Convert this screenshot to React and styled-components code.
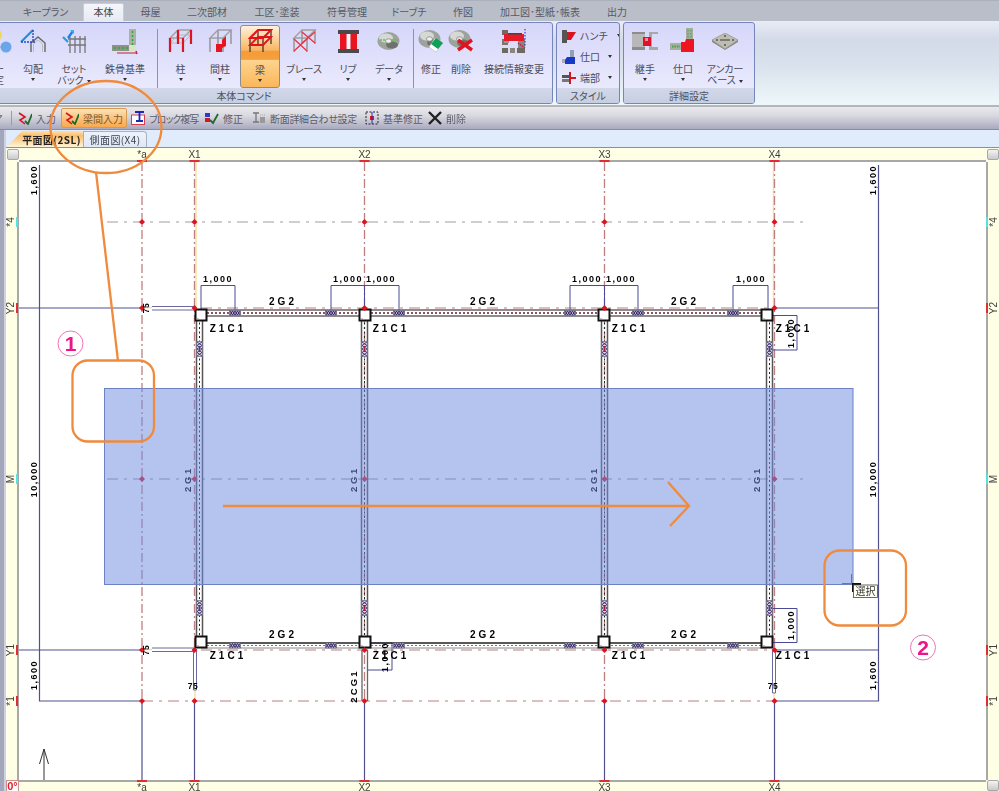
import React from "react";
import styled, { createGlobalStyle } from "styled-components";

const Global = createGlobalStyle`
  html, body { margin: 0; padding: 0; background: #fff; }
  #root { width: 999px; height: 791px; }
`;

const Page = styled.div`
  position: relative;
  width: 999px;
  height: 791px;
  overflow: hidden;
  display: flex;
  flex-direction: column;
  font-family: "Noto Sans CJK JP", "Liberation Sans", sans-serif;
  font-feature-settings: "palt";
  font-size: 10px;
  color: #4c4c58;
  filter: blur(0.4px);
`;

/* ---------- ribbon ---------- */
const TabBar = styled.div`
  height: 21px;
  flex: none;
  display: flex;
  align-items: flex-end;
  padding-left: 8px;
  background: #b9bec9;
  border-top: 1px solid #aab0bc;
  box-sizing: border-box;
`;
const RibbonTab = styled.div`
  width: ${(p) => p.$w}px;
  height: 18px;
  box-sizing: border-box;
  display: flex;
  align-items: center;
  justify-content: center;
  padding-bottom: 2px;
  white-space: nowrap;
  font-size: 10px;
  color: #565a66;
  ${(p) =>
    p.$active &&
    `background: linear-gradient(#f4f6fa, #e6eaf3);
     border-radius: 2px 2px 0 0;
     border: 1px solid #c8ccd6;
     border-bottom: none;
     color: #444;`}
`;
const Ribbon = styled.div`
  height: 86px;
  flex: none;
  box-sizing: border-box;
  display: flex;
  gap: 3px;
  padding-top: 1px;
  background: linear-gradient(#e8ecf5 0, #d4dae8 22%, #d8e1ec 50%, #eef7f9 100%);
  border-bottom: 2px solid #b4b6bc;
`;
const Group = styled.div`
  width: ${(p) => p.$w}px;
  margin-left: ${(p) => p.$ml || 0}px;
  height: 82px;
  flex: none;
  box-sizing: border-box;
  display: flex;
  flex-direction: column;
  border: 1px solid #7686bb;
  border-radius: 3px;
  overflow: hidden;
  background: linear-gradient(#d6d6fa, #eeeefe);
`;
const GroupBody = styled.div`
  flex: 1;
  display: flex;
  flex-direction: ${(p) => (p.$col ? "column" : "row")};
  padding: ${(p) => p.$pad || "2px 0 0 0"};
  min-height: 0;
`;
const GroupLabel = styled.div`
  height: 15px;
  flex: none;
  display: flex;
  align-items: center;
  justify-content: center;
  background: linear-gradient(#d2d8e8, #c6cee2);
  color: #4e5260;
  font-size: 10px;
`;
const BigButton = styled.div`
  width: ${(p) => p.$w}px;
  height: 63px;
  flex: none;
  box-sizing: border-box;
  display: flex;
  flex-direction: column;
  align-items: center;
  ${(p) =>
    p.$active &&
    `border: 1px solid #8c8c8c;
     border-radius: 3px;
     background: linear-gradient(#fff0dc 0, #fbc884 28%, #f9b463 40%, #f39c38 41%, #f59f3e 54%, #f6a648 55%, #fdd48e 56%, #fbb65a 100%);`}
`;
const IconSlot = styled.div`
  height: 32px;
  flex: none;
  margin: ${(p) => (p.$active ? "-1px 0 7px" : "0 0 6px")};
  display: flex;
  align-items: center;
  justify-content: center;
`;
const BigLabel = styled.div`
  display: flex;
  flex-direction: column;
  align-items: center;
  line-height: 11px;
  font-size: 10px;
  white-space: nowrap;
  color: #4c4c58;
`;
const Caret = styled.span`
  display: inline-block;
  flex: none;
  width: 0;
  height: 0;
  border-left: 2.5px solid transparent;
  border-right: 2.5px solid transparent;
  border-top: 3px solid #333;
  margin: ${(p) => p.$m || "4px 0 0 0"};
  vertical-align: middle;
`;
const Separator = styled.div`
  width: 1px;
  height: 59px;
  margin: 4px ${(p) => p.$mr}px 0 ${(p) => p.$ml}px;
  background: #8e94a8;
  flex: none;
`;
const SmallRow = styled.div`
  height: 21px;
  display: flex;
  align-items: center;
  gap: 4px;
  padding-left: 5px;
  white-space: nowrap;
`;

/* ---------- toolbar ---------- */
const Toolbar = styled.div`
  height: 23px;
  flex: none;
  box-sizing: border-box;
  display: flex;
  align-items: center;
  background: linear-gradient(#e9e9ed, #d8d8e0 40%, #aaaac0);
  border-bottom: 1px solid #8c8c9a;
`;
const ToolClip = styled.span`
  width: 10px;
  margin: 0 8px 0 -7px;
  flex: none;
  color: #5c5c68;
`;
const ToolSep = styled.div`
  width: 1px;
  height: 14px;
  margin-right: 2px;
  background: #9a9aa8;
`;
const ToolItem = styled.div`
  width: ${(p) => p.$w}px;
  height: 20px;
  flex: none;
  box-sizing: border-box;
  display: flex;
  align-items: center;
  gap: 4px;
  padding-left: 4px;
  white-space: nowrap;
  color: #5c5c68;
  font-size: 10px;
  letter-spacing: ${(p) => p.$sp || 0}px;
  ${(p) =>
    p.$active &&
    `background: linear-gradient(#fde3b8, #fbc37c 50%, #f9a94e);
     border: 1px solid #d89a50;
     border-radius: 2px;
     padding-left: 3px;
     color: #7a5a30;`}
`;

/* ---------- workspace ---------- */
const Body = styled.div`
  flex: 1;
  display: flex;
  min-height: 0;
`;
const SideStrip = styled.div`
  width: 6px;
  flex: none;
  background: linear-gradient(to right, #a4a6bc 0, #a4a6bc 4px, #ced2de 4px);
`;
const Workspace = styled.div`
  flex: 1;
  display: flex;
  flex-direction: column;
  min-width: 0;
`;
const SheetTabs = styled.div`
  height: 18px;
  flex: none;
  box-sizing: border-box;
  display: flex;
  align-items: flex-end;
  padding-left: 1px;
  background: #e0ebfb;
  border-bottom: 1px solid #8f8f8f;
`;
const SheetTab = styled.div`
  width: ${(p) => p.$w}px;
  height: 16px;
  flex: none;
  box-sizing: border-box;
  display: flex;
  align-items: center;
  justify-content: center;
  white-space: nowrap;
  font-size: 10px;
  padding-left: ${(p) => (p.$active ? 13 : 0)}px;
  border-radius: 0 4px 0 0;
  letter-spacing: 0.4px;
  font-weight: ${(p) => (p.$active ? 700 : 400)};
  color: ${(p) => (p.$active ? "#222" : "#3d4452")};
  background: ${(p) =>
    p.$active ? "linear-gradient(#ffe0a4, #fbbe6e 30%, #fff4d6)" : "linear-gradient(#eef3fb, #dfe8f5)"};
  ${(p) =>
    p.$active
      ? "clip-path: polygon(15px 0, 100% 0, 100% 100%, 0 100%);"
      : "border: 1px solid #a8b0c0; border-bottom: none;"}
`;
const CadGrid = styled.div`
  display: grid;
  grid-template-columns: 13px 967px 13px;
  grid-template-rows: 14px 618px 11px;
  background: #fff;
`;
const Ruler = styled.div`
  overflow: hidden;
  background: ${(p) => p.$bg};
  svg { display: block; }
`;
const CornerCell = styled.div`
  background: #ffffe6;
  box-sizing: border-box;
  padding: ${(p) => p.$pad};
`;
const CornerButton = styled.div`
  width: 12px;
  height: 11px;
  box-sizing: border-box;
  border: 1px solid #a8a8a8;
  border-radius: 2px;
  background: linear-gradient(#f4f4f4, #cacaca);
`;
const AngleBox = styled.div`
  height: 11px;
  box-sizing: border-box;
  border: 1px solid #c89090;
  border-bottom: none;
  background: #fff;
  color: #e0202c;
  font: 700 11px/11px "Liberation Sans", sans-serif;
  text-align: center;
`;
const Sheet = styled.svg`
  display: block;
  background: #fff;
`;
const Overlay = styled.svg`
  position: absolute;
  left: 0;
  top: 0;
  pointer-events: none;
`;

/* ---------- icons ---------- */
const Svg = ({ w, h, children }) => (
  <svg width={w} height={h} viewBox={`0 0 ${w} ${h}`} style={{ display: "block", flexShrink: 0 }}>
    {children}
  </svg>
);

const frame = { FL: [2, 10], FR: [15, 10], BR: [23, 2], BL: [10, 2] };
const Legs = ({ color = "#8a8a8a", sw = 1.6, len = 14 }) => (
  <g stroke={color} strokeWidth={sw}>
    {Object.values(frame).map(([x, y], i) => (
      <line key={i} x1={x} y1={y} x2={x} y2={y + len} />
    ))}
  </g>
);
const Top = ({ color = "#9a9a9a", sw = 1.4, y = 0, fill = "none" }) => (
  <polygon
    points={`2,${10 + y} 15,${10 + y} 23,${2 + y} 10,${2 + y}`}
    fill={fill}
    stroke={color}
    strokeWidth={sw}
  />
);

const IconBalls = () => (
  <Svg w={26} h={26}>
    <line x1="9" y1="12" x2="14" y2="20" stroke="#9aa" strokeWidth="2" />
    <circle cx="10" cy="7" r="6" fill="#f4d65c" />
    <circle cx="9" cy="6" r="2.500" fill="#fff2b0" />
    <circle cx="20" cy="19" r="5.500" fill="#6aa6e8" />
    <circle cx="7" cy="20" r="5.500" fill="#7ee0e0" />
  </Svg>
);
const IconSlope = () => (
  <Svg w={26} h={26}>
    <path d="M11 24V15L18 9L25 15V24" fill="none" stroke="#666" strokeWidth="1.400" />
    <path d="M13.500 24V16L18 12L22.500 16V24" fill="none" stroke="#bbb" strokeWidth="1" />
    <path d="M1 14L13 2" stroke="#1f8fe0" strokeWidth="2.200" />
    <path d="M1 14H16" stroke="#1a50c8" strokeWidth="1.300" strokeDasharray="2 1" />
    <path d="M13 2V14" stroke="#2040b0" strokeWidth="1.300" strokeDasharray="2 1" />
  </Svg>
);
const IconSetback = () => (
  <Svg w={26} h={26}>
    <g stroke="#777" strokeWidth="1.300" fill="none">
      <path d="M7 11H25M7 17H25" />
      <path d="M9 9V25M14 8V25M19 8V25M24 8V25" />
    </g>
    <path d="M2 9L7 14" stroke="#20a0e0" strokeWidth="2.200" />
    <path d="M7 10L12 3" stroke="#2080e0" strokeWidth="2.400" />
    <path d="M9 2H13V6Z" fill="#30b0e8" />
  </Svg>
);
const IconSteel = () => (
  <Svg w={28} h={27}>
    <rect x="18" y="1" width="7" height="22" fill="#a8b4a0" />
    <rect x="1" y="17" width="24" height="6" fill="#8c9488" />
    <path d="M21.500 3V19M3 20H22" stroke="#34a044" strokeWidth="1.500" strokeDasharray="2 2" />
    <rect x="18" y="17" width="7" height="6" fill="#d8e4c8" />
    <path d="M6 25H26" stroke="#c02030" strokeWidth="1.200" />
    <path d="M25 23L26 26" stroke="#d02030" strokeWidth="1.500" />
  </Svg>
);
const IconColumn = () => (
  <Svg w={25} h={26}>
    <Top color="#a0a0a0" />
    <Top color="#b8b8b8" sw={1} y={5} />
    <Legs color="#e0141e" sw={2.200} />
  </Svg>
);
const IconStud = () => (
  <Svg w={25} h={26}>
    <Top color="#a0a0a0" />
    <Legs color="#9a9a9a" />
    <path d="M8 16L8 24H14V16ZM14 12L18 8V18L14 20Z" fill="#e8141e" />
  </Svg>
);
const IconBeam = () => (
  <Svg w={25} h={26}>
    <Legs color="#5a3a30" sw={1.400} />
    <Top color="#e0141e" sw={2} />
    <Top color="#e0141e" sw={1.800} y={7} />
  </Svg>
);
const IconBrace = () => (
  <Svg w={25} h={26}>
    <Top color="#a0a0a0" />
    <Legs color="#9a9a9a" />
    <path d="M2 11L15 23M15 11L2 23M10 4L23 15M23 4L10 15" stroke="#e8323c" strokeWidth="1.300" />
  </Svg>
);
const IconRib = () => (
  <Svg w={23} h={23}>
    <rect x="1" y="0" width="21" height="4" fill="#4a4a4a" />
    <rect x="1" y="19" width="21" height="4" fill="#4a4a4a" />
    <rect x="9.500" y="4" width="4" height="15" fill="#f4f4f4" />
    <rect x="3" y="4" width="6.500" height="15" fill="#e8141e" />
    <rect x="13.500" y="4" width="6.500" height="15" fill="#e8141e" />
  </Svg>
);
const Disc = () => (
  <>
    <ellipse cx="11.500" cy="10" rx="11" ry="9" fill="#9ea29c" />
    <ellipse cx="9" cy="7" rx="7" ry="4.500" fill="#d6d8d4" />
    <ellipse cx="15" cy="14" rx="6" ry="3.500" fill="#6e726c" />
    <ellipse cx="11.500" cy="10" rx="3" ry="2.200" fill="#f0f0f0" stroke="#777" strokeWidth=".7" />
  </>
);
const IconData = () => (
  <Svg w={24} h={20}>
    <Disc />
    <path d="M3 9H9M14 9H21" stroke="#5cc050" strokeWidth="1.600" strokeDasharray="2 1" />
  </Svg>
);
const IconFix = () => (
  <Svg w={27} h={25}>
    <Disc />
    <path d="M17 9L25 14L18 23L11 18Z" fill="#fff" stroke="#bbb" strokeWidth=".6" />
    <path d="M18 9L25 14L20 20L13 15Z" fill="#10a058" />
  </Svg>
);
const IconDelete = () => (
  <Svg w={27} h={25}>
    <Disc />
    <path d="M10 11L24 21M24 11L10 21" stroke="#e0141e" strokeWidth="3.400" />
  </Svg>
);
const IconJoint = () => (
  <Svg w={26} h={26}>
    <rect x="1" y="2" width="6" height="5" fill="#6e6a60" />
    <rect x="1" y="11" width="6" height="6" fill="#7a766c" />
    <rect x="1" y="20" width="6" height="5" fill="#6e6a60" />
    <rect x="9" y="20" width="5" height="5" fill="#8a867c" />
    <rect x="16" y="20" width="8" height="5" fill="#6e6a60" />
    <rect x="17" y="11" width="7" height="9" fill="#8a867c" />
    <rect x="3" y="6" width="20" height="7" fill="#e81a28" />
    <rect x="7" y="5" width="14" height="1.500" fill="#444" />
    <rect x="3" y="13" width="5" height="2" fill="#9a968c" />
    <path d="M24 1V19" fill="none" stroke="#2020c0" strokeWidth="1" strokeDasharray="1.500 1.500" />
    <path d="M17 15L24 20" stroke="#c02060" strokeWidth="1.500" strokeDasharray="1.500 1" />
  </Svg>
);
const IconTsugite = () => (
  <Svg w={26} h={19}>
    <path d="M0 1H13V18H0Z" fill="#b8b8b8" />
    <path d="M0 0H13V2H0ZM0 15H13V18H0Z" fill="#8c8c8c" />
    <path d="M17 0H26V2H20V15H26V18H17Z" fill="#a8a8a8" />
    <rect x="11" y="5" width="8" height="9" fill="#e0102a" />
    <rect x="13" y="6" width="3" height="3" fill="#f09090" />
  </Svg>
);
const IconShiguchi = () => (
  <Svg w={26} h={26}>
    <rect x="16" y="0" width="7" height="12" fill="#a4aca0" />
    <path d="M18 2V11M21 2V11" stroke="#40a050" strokeDasharray="1.500 1.500" />
    <rect x="0" y="15" width="11" height="7" fill="#a8b0a0" />
    <path d="M2 18.500H10" stroke="#40a050" strokeWidth="2" strokeDasharray="1.500 1" />
    <path d="M11 14H15L16 11H24V24H11Z" fill="#ee1420" />
  </Svg>
);
const IconAnchor = () => (
  <Svg w={26} h={17}>
    <path d="M13 0L26 7L13 16L0 7Z" fill="#bcbcb0" stroke="#8a8a80" strokeWidth=".6" />
    <path d="M0 7V9L13 17L26 9V7L13 16Z" fill="#8a8a80" />
    <path d="M8 7H18" stroke="#666" strokeWidth="1.500" />
    <circle cx="13" cy="3" r="1" fill="#555" />
    <circle cx="13" cy="12" r="1" fill="#555" />
    <circle cx="5" cy="7" r="1" fill="#555" />
    <circle cx="21" cy="7" r="1" fill="#555" />
  </Svg>
);
const IconHaunch = () => (
  <Svg w={14} h={14}>
    <rect x="0" y="1" width="5" height="13" fill="#555" />
    <path d="M5 3H14L9 11H5Z" fill="#d81420" />
  </Svg>
);
const IconSmallJoint = () => (
  <Svg w={14} h={14}>
    <rect x="8" y="0" width="4" height="8" fill="#8fa0b8" />
    <rect x="0" y="9" width="5" height="4" fill="#aab" />
    <path d="M5 7H13V14H3V10Z" fill="#1838c8" />
  </Svg>
);
const IconEnd = () => (
  <Svg w={14} h={14}>
    <rect x="0" y="4" width="7" height="3" fill="#555" />
    <rect x="0" y="8" width="7" height="3" fill="#777" />
    <rect x="7" y="1" width="2" height="12" fill="#d81420" />
    <rect x="9" y="6" width="5" height="2" fill="#d81420" />
  </Svg>
);
const IconInput = () => (
  <Svg w={14} h={14}>
    <path d="M1 2L7 6L2 9L7 13" fill="none" stroke="#d81420" strokeWidth="1.600" />
    <path d="M7 10L10 13L14 3" fill="none" stroke="#1e6a2c" strokeWidth="1.800" />
  </Svg>
);
const IconBlock = () => (
  <Svg w={14} h={14}>
    <rect x="0.500" y="4" width="13" height="9.500" fill="#fff" stroke="#d84050" />
    <path d="M4 1H13M8.500 1V10M5 10H12" stroke="#1828b8" strokeWidth="1.800" />
  </Svg>
);
const IconModify = () => (
  <Svg w={14} h={14}>
    <rect x="0" y="2" width="5" height="4" fill="#2040d0" />
    <rect x="0" y="7" width="5" height="4" fill="#d81420" />
    <path d="M5 9L8 12L13 3" fill="none" stroke="#1e6a2c" strokeWidth="1.800" />
  </Svg>
);
const IconSection = () => (
  <Svg w={14} h={14}>
    <path d="M1 2H7M4 2V11M1 11H7" stroke="#777" strokeWidth="1.300" fill="none" />
    <rect x="8" y="6" width="5" height="6" fill="#999" />
    <path d="M8 4H13" stroke="#aaa" strokeDasharray="1 1" />
  </Svg>
);
const IconBase = () => (
  <Svg w={14} h={14}>
    <rect x="1" y="1" width="12" height="12" fill="none" stroke="#222" strokeDasharray="2 1.500" />
    <rect x="5" y="5" width="4" height="4" fill="#e01420" />
    <path d="M7 1V13" stroke="#2030c0" />
  </Svg>
);
const IconCross = () => (
  <Svg w={14} h={14}>
    <path d="M1 1L13 13M13 1L1 13" stroke="#222" strokeWidth="2.400" />
  </Svg>
);

/* ---------- drawing data ---------- */
const CAD = '"Liberation Sans", sans-serif';
const gridX = [142, 194.500, 364.500, 604.500, 774.500];
const gridY = [222, 308, 479, 650, 701];
const beamX = [199.500, 364.500, 604.500, 769.500];
const colX = [201, 365, 604, 767];
const hConn = [235, 331, 399, 570, 638, 733];
const gridColor = "#bf7f7f";

const Txt = ({ x, y, rot, size = 8.500, sp = 1.600, fill = "#000", children }) => (
  <text
    x={x}
    y={y}
    fontFamily={CAD}
    fontWeight="700"
    fontSize={size}
    letterSpacing={sp}
    fill={fill}
    textAnchor="middle"
    transform={rot ? `rotate(-90 ${x} ${y})` : undefined}
  >
    {children}
  </text>
);

const ConnH = ({ x, y }) => (
  <g>
    <rect x={x - 5.500} y={y - 2.500} width="11" height="5" fill="#c8c4dc" stroke="#66667c" strokeWidth=".7" />
    <path
      d={`M${x - 5} ${y + 2}l2.500 -4l2.500 4l2.500 -4l2.500 4M${x - 5} ${y - 2}l2.500 4l2.500 -4l2.500 4l2.500 -4`}
      stroke="#2c1c60"
      strokeWidth=".9"
      fill="none"
    />
  </g>
);
const ConnV = ({ x, y }) => (
  <g>
    <rect x={x - 3} y={y - 7.500} width="6" height="15" fill="#d8d4e4" stroke="#66667c" strokeWidth=".7" />
    <path
      d={`M${x - 2.500} ${y - 7}l5 3.500l-5 3.500l5 3.500l-5 3.500M${x + 2.500} ${y - 7}l-5 3.500l5 3.500l-5 3.500l5 3.500`}
      stroke="#2c1c60"
      strokeWidth=".8"
      fill="none"
    />
    <path d={`M${x} ${y - 3}V${y + 3}`} stroke="#a02040" strokeWidth="1" />
  </g>
);
const ColumnBox = ({ x, y }) => (
  <g>
    <rect x={x - 5.500} y={y - 5.500} width="11" height="11" fill="#fff" stroke="#111" strokeWidth="2" />
    <path d={`M${x - 5} ${y + 4}h3`} stroke="#888" />
  </g>
);
const Bracket = ({ a, b, mid }) => (
  <path
    d={`M${a} 310V285.500H${b}V310${mid ? `M${mid} 285.500V308` : ""}`}
    fill="none"
    stroke="#4a4a96"
    strokeWidth="1"
  />
);

const Drawing = () => (
  <Sheet width="967" height="618" viewBox="19 162 967 618">
    {/* outer dimension lines */}
    <g stroke="#50508f" strokeWidth="1.200" fill="none">
      <path d="M39.500 165V701H142" />
      <path d="M878.500 165V701H774" />
      <path d="M19 308H142M774 308H878M19 650H142M774 650H878" />
      {gridX.map((x) => (
        <line key={x} x1={x} y1="701" x2={x} y2="780" />
      ))}
    </g>
    {/* horizontal grid */}
    <g fill="none" strokeDasharray="11 6 3 6" strokeWidth="1">
      <path d="M107 222H805" stroke="#a89a9a" />
      <path d="M107 479H805" stroke="#8f8f9f" />
      <path d="M142 701H774" stroke="#b88080" />
      <path d="M201 308H774" stroke="#b88080" />
      <path d="M201 650H774" stroke="#b88080" />
    </g>
    {/* vertical grid */}
    <path d="M196 162V310M773.500 162V310M195 690V700M774 693V700M146 307.500H152M146 649.500H152" stroke="#f0e2a0" strokeWidth="1.400" />
    <g stroke={gridColor} strokeWidth="1.300" strokeDasharray="9 3 2 3" fill="none">
      <line x1={142} y1="162" x2={142} y2="701" />
      <line x1={194.500} y1="162" x2={194.500} y2="650" />
      <line x1={364.500} y1="162" x2={364.500} y2="701" />
      <line x1={604.500} y1="162" x2={604.500} y2="701" />
      <line x1={774.500} y1="162" x2={774.500} y2="650" />
    </g>
    {/* small stub lines labelled 75 */}
    <g fill="none" stroke="#6a6aa0" strokeWidth="1">
      <path d="M152 306.500H194V310H152M152 648H194V651.500H152" />
      <path d="M193.500 651V690H196.500V651M772.500 651V693H775.500V651" />
    </g>
    {/* dimension brackets */}
    <Bracket a={201} b={235} />
    <Bracket a={331} b={399} mid={364.500} />
    <Bracket a={570} b={638} mid={604.500} />
    <Bracket a={733} b={768} />
    <path d="M773 315.500H797V350H772M772 608.500H797V642.500H772M368 643H392V670H368" fill="none" stroke="#4a4a96" />
    <path d="M367.500 650V701M362 650V701" stroke="#666" strokeWidth="1.300" />

    {/* vertical beams */}
    {beamX.map((x) => (
      <g key={x}>
        <path d={`M${x - 3} 316V642M${x + 3} 316V642`} stroke="#555" strokeWidth="1.500" />
        <path d={`M${x} 318V640`} stroke="#222" strokeWidth="1" strokeDasharray="2 2.500" />
      </g>
    ))}
    {/* horizontal beams */}
    <path d="M201 310H767M201 316H767" stroke="#666" strokeWidth="1.400" />
    <path d="M207 313H761" stroke="#6a1c34" strokeWidth="1.500" strokeDasharray="2 2" />
    <path d="M201 643H767" stroke="#222" strokeWidth="1.400" />
    <path d="M201 648H767" stroke="#888" strokeWidth="1" />
    <path d="M207 645.500H761" stroke="#777" strokeWidth="1" strokeDasharray="2 2" />
    {hConn.map((x) => (
      <g key={x}>
        <ConnH x={x} y={313} />
        <ConnH x={x} y={645.500} />
      </g>
    ))}
    {beamX.map((x) => (
      <g key={x}>
        <ConnV x={x} y={349} />
        <ConnV x={x} y={608} />
      </g>
    ))}
    {colX.map((x) => (
      <g key={x}>
        <ColumnBox x={x} y={315} />
        <ColumnBox x={x} y={642} />
      </g>
    ))}
    {/* nodes */}
    {gridX.map((x) =>
      gridY.map((y) => (
        <path key={`${x}-${y}`} d={`M${x} ${y - 3}l3 3l-3 3l-3 -3Z`} fill="#dc1420" />
      ))
    )}

    {/* labels */}
    {[[218, 282], [348, 282], [381, 282], [587, 282], [621, 282], [751, 282]].map(([x, y]) => (
      <Txt key={x} x={x} y={y} size={9} sp={1.500}>1,000</Txt>
    ))}
    {[283, 484, 685].map((x) => (
      <g key={x}>
        <Txt x={x} y={305} size={10} sp={3}>2G2</Txt>
        <Txt x={x} y={638} size={10} sp={3}>2G2</Txt>
      </g>
    ))}
    {[228, 391, 630, 794].map((x) => (
      <g key={x}>
        <Txt x={x} y={332} size={10} sp={3}>Z1C1</Txt>
        <Txt x={x} y={659} size={10} sp={3}>Z1C1</Txt>
      </g>
    ))}
    {[191, 357, 597, 760].map((x) => (
      <Txt key={x} x={x} y={479} rot size={9.500} sp={2.600}>2G1</Txt>
    ))}
    <Txt x={357} y={686} rot size={9.500} sp={2.200}>2CG1</Txt>
    <Txt x={37} y={180} rot size={9} sp={1.500}>1,600</Txt>
    <Txt x={876} y={180} rot size={9} sp={1.500}>1,600</Txt>
    <Txt x={37} y={479} rot size={9} sp={1.500}>10,000</Txt>
    <Txt x={876} y={479} rot size={9} sp={1.500}>10,000</Txt>
    <Txt x={37} y={675} rot size={9} sp={1.500}>1,600</Txt>
    <Txt x={876} y={675} rot size={9} sp={1.500}>1,600</Txt>
    <Txt x={794} y={333} rot size={9} sp={1.500}>1,000</Txt>
    <Txt x={794} y={625} rot size={9} sp={1.500}>1,000</Txt>
    <Txt x={388} y={657} rot size={9} sp={1.500}>1,000</Txt>
    <Txt x={193} y={689} size={8.500} sp={0.500}>75</Txt>
    <Txt x={773} y={689} size={8.500} sp={0.500}>75</Txt>
    <Txt x={149} y={308} rot size={8.500} sp={0.500}>75</Txt>
    <Txt x={149} y={650} rot size={8.500} sp={0.500}>75</Txt>

    {/* north arrow */}
    <path d="M44 780V749M39.500 764L44 749L48.500 764" fill="none" stroke="#333" strokeWidth="1" />

    {/* rubber-band selection */}
    <rect x="104.500" y="388.500" width="748.500" height="196" fill="#6f8ee0" fillOpacity=".52" stroke="#6c82c4" strokeWidth="1" />
  </Sheet>
);

const Tick = ({ x, y, w, h, color = "#e02c34" }) => <rect x={x} y={y} width={w} height={h} fill={color} />;
const RulerText = ({ x, y, rot, children }) => (
  <text
    x={x}
    y={y}
    fontFamily={CAD}
    fontSize="10"
    fill="#3c3c3c"
    textAnchor="middle"
    transform={rot ? `rotate(-90 ${x} ${y})` : undefined}
  >
    {children}
  </text>
);
const xLabels = [[142, "*a"], [194.500, "X1"], [364.500, "X2"], [604.500, "X3"], [774.500, "X4"]];
const yLabels = [[222, "*4", 1], [308, "Y2", 0], [479, "M", 1], [650, "Y1", 0], [701, "*1", 0]];

const TopRuler = () => (
  <svg width="967" height="14" viewBox="19 148 967 14">
    {xLabels.map(([x, t]) => (
      <g key={t}>
        <Tick x={x - 5} y={160} w={10} h={2} />
        <RulerText x={x} y={158}>{t}</RulerText>
      </g>
    ))}
  </svg>
);
const BottomRuler = () => (
  <svg width="967" height="11" viewBox="19 780 967 11">
    {xLabels.map(([x, t]) => (
      <g key={t}>
        <Tick x={x - 5} y={780} w={10} h={2} />
        <RulerText x={x} y={790.500}>{t}</RulerText>
      </g>
    ))}
  </svg>
);
const SideRuler = ({ left }) => {
  const x0 = left ? 6 : 986;
  return (
    <svg width="13" height="618" viewBox={`${x0} 162 13 618`}>
      {yLabels.map(([y, t, cyan]) => (
        <g key={t}>
          <Tick x={left ? 16 : 986} y={y - 5} w={2} h={10} color={cyan ? "#55e0e4" : "#e02c34"} />
          <RulerText x={left ? 14 : 997} y={y} rot>{t}</RulerText>
        </g>
      ))}
    </svg>
  );
};

const Annotations = () => (
  <Overlay width="999" height="791" viewBox="0 0 999 791">
    <g fill="none" stroke="#f08a3c" strokeWidth="2.300">
      <ellipse cx="106" cy="127" rx="55.500" ry="46" />
      <path d="M96 172L118 361" />
      <rect x="72.500" y="360.500" width="81.500" height="81" rx="15" />
      <rect x="824.500" y="550.500" width="81.500" height="75" rx="15" />
      <path d="M223 506H688M668 482L689 506L670 526" />
    </g>
    <g>
      <circle cx="70.500" cy="343.500" r="12.500" fill="none" stroke="#e878b4" strokeWidth="1" />
      <text x="70.500" y="351" textAnchor="middle" fontFamily={CAD} fontWeight="700" fontSize="21" fill="#ee1488">1</text>
      <circle cx="923" cy="647.500" r="12.500" fill="none" stroke="#e878b4" strokeWidth="1" />
      <text x="923" y="655" textAnchor="middle" fontFamily={CAD} fontWeight="700" fontSize="21" fill="#ee1488">2</text>
    </g>
    <path d="M842 583.500H852M851.500 574V584" stroke="#8a7a40" strokeWidth="1" />
    <rect x="852" y="583" width="9" height="2" fill="#111" />
    <rect x="852" y="583" width="2" height="9" fill="#111" />
    <rect x="853.500" y="585" width="24" height="12.500" fill="#fffff4" stroke="#444" strokeWidth=".8" />
    <text x="865.500" y="595" textAnchor="middle" fontFamily='"Noto Sans CJK JP", sans-serif' fontSize="10" fill="#333">選択</text>
  </Overlay>
);

const Big = ({ w, icon, active, caret = true, lines, inlineCaret }) => (
  <BigButton $w={w} $active={active}>
    <IconSlot $active={active}>{icon}</IconSlot>
    <BigLabel>
      {lines.map((l, i) => (
        <span key={l}>
          {l}
          {inlineCaret && i === lines.length - 1 && <Caret $m="0 0 0 3px" />}
        </span>
      ))}
      {caret && !inlineCaret && <Caret />}
    </BigLabel>
  </BigButton>
);

export default function App() {
  return (
    <Page>
      <Global />
      <TabBar>
        <RibbonTab $w={75}>キープラン</RibbonTab>
        <RibbonTab $w={41} $active>本体</RibbonTab>
        <RibbonTab $w={53}>母屋</RibbonTab>
        <RibbonTab $w={60}>二次部材</RibbonTab>
        <RibbonTab $w={80}>工区･塗装</RibbonTab>
        <RibbonTab $w={60}>符号管理</RibbonTab>
        <RibbonTab $w={64}>ドーブチ</RibbonTab>
        <RibbonTab $w={44}>作図</RibbonTab>
        <RibbonTab $w={110}>加工図･型紙･帳表</RibbonTab>
        <RibbonTab $w={44}>出力</RibbonTab>
      </TabBar>
      <Ribbon>
        <Group $w={618} $ml={-65}>
          <GroupBody $pad="2px 0 0 48px">
            <Big w={30} icon={<IconBalls />} caret={false} lines={["ー", "定"]} />
            <Big w={38} icon={<IconSlope />} lines={["勾配"]} />
            <Big w={44} icon={<IconSetback />} inlineCaret lines={["セット", "バック"]} />
            <Big w={58} icon={<IconSteel />} lines={["鉄骨基準"]} />
            <Separator $ml={3} $mr={3} />
            <Big w={39} icon={<IconColumn />} lines={["柱"]} />
            <Big w={40} icon={<IconStud />} lines={["間柱"]} />
            <Big w={40} icon={<IconBeam />} active lines={["梁"]} />
            <Big w={48} icon={<IconBrace />} lines={["ブレース"]} />
            <Big w={40} icon={<IconRib />} lines={["リブ"]} />
            <Big w={42} icon={<IconData />} lines={["データ"]} />
            <Separator $ml={3} $mr={2} />
            <Big w={30} icon={<IconFix />} caret={false} lines={["修正"]} />
            <Big w={30} icon={<IconDelete />} caret={false} lines={["削除"]} />
            <Big w={76} icon={<IconJoint />} caret={false} lines={["接続情報変更"]} />
          </GroupBody>
          <GroupLabel>本体コマンド</GroupLabel>
        </Group>
        <Group $w={64}>
          <GroupBody $col>
            <SmallRow><IconHaunch />ハンチ<Caret $m="0 0 0 5px" /></SmallRow>
            <SmallRow><IconSmallJoint />仕口<Caret $m="0 0 0 4px" /></SmallRow>
            <SmallRow><IconEnd />端部<Caret $m="0 0 0 4px" /></SmallRow>
          </GroupBody>
          <GroupLabel>スタイル</GroupLabel>
        </Group>
        <Group $w={132}>
          <GroupBody $pad="2px 0 0 2px">
            <Big w={38} icon={<IconTsugite />} lines={["継手"]} />
            <Big w={38} icon={<IconShiguchi />} lines={["仕口"]} />
            <Big w={46} icon={<IconAnchor />} inlineCaret lines={["アンカー", "ベース"]} />
          </GroupBody>
          <GroupLabel>詳細設定</GroupLabel>
        </Group>
      </Ribbon>
      <Toolbar>
        <ToolClip>ア</ToolClip>
        <ToolSep />
        <ToolItem $w={47}><IconInput />入力</ToolItem>
        <ToolItem $w={66} $active><IconInput />梁間入力</ToolItem>
        <ToolItem $w={74} $sp={-1}><IconBlock />ブロック複写</ToolItem>
        <ToolItem $w={47}><IconModify />修正</ToolItem>
        <ToolItem $w={113} $sp={-0.3}><IconSection />断面詳細合わせ設定</ToolItem>
        <ToolItem $w={63}><IconBase />基準修正</ToolItem>
        <ToolItem $w={44}><IconCross />削除</ToolItem>
      </Toolbar>
      <Body>
        <SideStrip />
        <Workspace>
          <SheetTabs>
            <SheetTab $w={76} $active>平面図(2SL)</SheetTab>
            <SheetTab $w={64}>側面図(X4)</SheetTab>
          </SheetTabs>
          <CadGrid>
            <CornerCell $pad="1px 0 0 1px"><CornerButton /></CornerCell>
            <Ruler $bg="linear-gradient(#ffffe6 12px, #a8a8a8 12px)"><TopRuler /></Ruler>
            <CornerCell $pad="1px 0 0 1px"><CornerButton /></CornerCell>
            <Ruler $bg="linear-gradient(to right, #fff 0, #ffffe6 1px, #ffffe6 11px, #a8a8a8 11px)"><SideRuler left /></Ruler>
            <Drawing />
            <Ruler $bg="linear-gradient(to right, #a8a8a8 2px, #ffffe6 2px)"><SideRuler /></Ruler>
            <AngleBox>0°</AngleBox>
            <Ruler $bg="linear-gradient(#a8a8a8 2px, #ffffe6 2px)"><BottomRuler /></Ruler>
            <CornerCell $pad="0 0 0 1px"><CornerButton /></CornerCell>
          </CadGrid>
        </Workspace>
      </Body>
      <Annotations />
    </Page>
  );
}
